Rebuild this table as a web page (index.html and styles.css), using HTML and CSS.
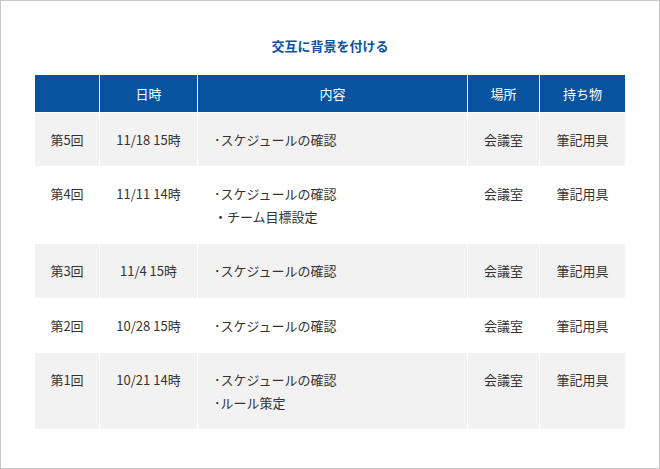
FILE: index.html
```html
<!DOCTYPE html>
<html lang="ja">
<head>
<meta charset="utf-8">
<link rel="stylesheet" href="styles.css">
</head>
<body>
<div class="frame">
  <h1 class="title">交互に背景を付ける</h1>
  <table class="schedule">
    <colgroup>
      <col class="c1"><col class="c2"><col class="c3"><col class="c4"><col class="c5">
    </colgroup>
    <thead>
      <tr><th></th><th>日時</th><th>内容</th><th>場所</th><th>持ち物</th></tr>
    </thead>
    <tbody>
      <tr><td>第5回</td><td>11/18 15時</td><td class="desc">･スケジュールの確認</td><td>会議室</td><td>筆記用具</td></tr>
      <tr><td>第4回</td><td>11/11 14時</td><td class="desc">･スケジュールの確認<br>・チーム目標設定</td><td>会議室</td><td>筆記用具</td></tr>
      <tr><td>第3回</td><td>11/4 15時</td><td class="desc">･スケジュールの確認</td><td>会議室</td><td>筆記用具</td></tr>
      <tr><td>第2回</td><td>10/28 15時</td><td class="desc">･スケジュールの確認</td><td>会議室</td><td>筆記用具</td></tr>
      <tr><td>第1回</td><td>10/21 14時</td><td class="desc">･スケジュールの確認<br>･ルール策定</td><td>会議室</td><td>筆記用具</td></tr>
    </tbody>
  </table>
</div>
</body>
</html>
```
FILE: styles.css
```css
html, body {
  margin: 0;
  padding: 0;
  background: #fff;
}
body {
  font-family: "Noto Sans CJK JP", "Noto Sans", sans-serif;
  color: #333;
}
.frame {
  box-sizing: border-box;
  width: 660px;
  height: 469px;
  border: 1px solid #c8c8c8;
  padding-top: 35px;
}
.title {
  margin: 0 0 18px;
  font-size: 13px;
  line-height: 20px;
  font-weight: bold;
  color: #0b519d;
  text-align: center;
}
.schedule {
  width: 591px;
  margin: 0 auto;
  border-collapse: collapse;
  table-layout: fixed;
  font-size: 13px;
}
.c1 { width: 65px; }
.c2 { width: 98px; }
.c3 { width: 270px; }
.c4 { width: 72px; }
.c5 { width: 86px; }
.schedule th {
  background: #0853a0;
  color: #fff;
  font-weight: normal;
  line-height: 20px;
  padding: 9px 0 8px;
  border: 1px solid #fff;
  text-align: center;
}
.schedule td {
  border: 1px solid #fff;
  padding: 16px 0 14.5px;
  line-height: 22.75px;
  text-align: center;
  vertical-align: top;
}
.schedule td.desc {
  text-align: left;
  padding-left: 16px;
}
.schedule tbody tr:nth-child(odd) td {
  background: #f2f2f2;
}
```
